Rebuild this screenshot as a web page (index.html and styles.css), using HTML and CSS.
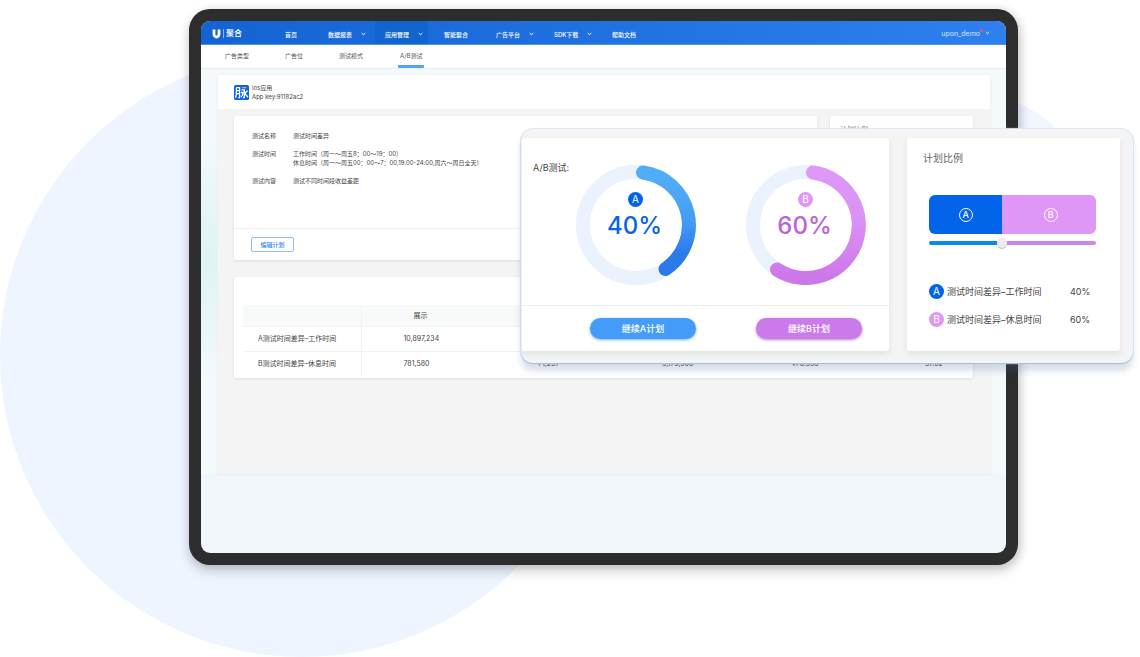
FILE: index.html
```html
<!DOCTYPE html>
<html lang="zh-CN">
<head>
<meta charset="utf-8">
<title>U聚合 A/B测试</title>
<link rel="stylesheet" href="styles.css">
</head>
<body>
<main class="stage">
  <div class="bubble bubble-large"></div>
  <div class="bubble bubble-small"></div>
  <div class="tablet">
    <div class="screen">
      <header class="topbar">
        <a class="brand" href="#">
          <svg class="brand-mark" viewBox="0 0 9 10"><path d="M2 0.5V5.2a2.5 2.8 0 0 0 5 0V0.5" fill="none" stroke="#fff" stroke-width="2.8"/></svg>
          <span class="brand-name">聚合</span>
        </a>
        <nav class="menu">
          <a class="menu-item home" href="#">首页</a>
          <a class="menu-item reports" href="#">数据报表<svg class="chevron" viewBox="0 0 5 4"><path d="M0.7 1l1.8 1.7L4.3 1"/></svg></a>
          <a class="menu-item apps" href="#">应用管理<svg class="chevron" viewBox="0 0 5 4"><path d="M0.7 1l1.8 1.7L4.3 1"/></svg></a>
          <a class="menu-item smart" href="#">智能聚合</a>
          <a class="menu-item platform" href="#">广告平台<svg class="chevron" viewBox="0 0 5 4"><path d="M0.7 1l1.8 1.7L4.3 1"/></svg></a>
          <a class="menu-item sdk" href="#">SDK下载<svg class="chevron" viewBox="0 0 5 4"><path d="M0.7 1l1.8 1.7L4.3 1"/></svg></a>
          <a class="menu-item docs" href="#">帮助文档</a>
        </nav>
        <a class="user" href="#">upon_demo<i class="dot"></i><svg class="chevron" viewBox="0 0 5 4"><path d="M0.7 1l1.8 1.7L4.3 1"/></svg></a>
      </header>
      <nav class="subnav">
        <a href="#">广告类型</a>
        <a href="#">广告位</a>
        <a href="#">测试模式</a>
        <a class="current" href="#">A/B测试</a>
      </nav>
      <div class="workspace">
        <section class="app">
          <div class="app-head">
            <svg class="app-icon" viewBox="0 0 14 14"><rect width="14" height="14" rx="1.5" fill="#0b63ea"/><g fill="none" stroke="#fff" stroke-width="1.2"><path d="M2.2 2.4h3v9.300H4M2.2 2.4v6.5l-.8 3M2.2 5.2h3M2.2 8h3M7 4.6h2.700v7.2H8.300M6.5 7h2c0 2-.8 3.300-2 4.300M12.700 5.200l-2.200 2.300M9.800 6c.6 2.600 1.500 4.200 3.200 5.300"/></g><path d="M7.500 2.500h4" stroke="#ffa42b" stroke-width="1.200"/></svg>
            <div><p>ios应用</p><p>App key:91182ac2</p></div>
          </div>
          <div class="app-body">
            <div class="row">
              <div class="card plan">
                <dl class="facts">
                  <dt>测试名称</dt><dd>测试时间差异</dd>
                  <dt>测试时间</dt><dd>工作时间（周一～周五8：00～19：00）<br>休息时间（周一～周五00：00～7：00,19:00-24:00,周六～周日全天）</dd>
                  <dt>测试内容</dt><dd>测试不同时间段收益差距</dd>
                </dl>
                <div class="plan-foot"><button class="edit" type="button">编辑计划</button></div>
              </div>
              <div class="card ratio-small">计划比例</div>
            </div>
            <div class="card results">
              <table class="table">
                <colgroup><col class="col-name"><col class="col-a"><col class="col-b"><col class="col-c"><col class="col-d"><col></colgroup>
                <thead><tr><th></th><th>展示</th><th></th><th></th><th></th><th></th></tr></thead>
                <tbody>
                  <tr><td>A测试时间差异–工作时间</td><td>10,897,234</td><td></td><td></td><td></td><td></td></tr>
                  <tr><td>B测试时间差异–休息时间</td><td>781,580</td><td>71,237</td><td>9,175,568</td><td>¥78.558</td><td>57.02</td></tr>
                </tbody>
              </table>
            </div>
          </div>
        </section>
      </div>
    </div>
  </div>

  <section class="popup">
    <div class="panel compare">
      <div class="charts">
        <h2 class="compare-title">A/B测试:</h2>
        <div class="ring">
          <svg class="ring-art" viewBox="0 0 120 120">
            <defs><linearGradient id="blue" x1="0" y1="0" x2="0" y2="1"><stop offset="0.050" stop-color="#52adf7"/><stop offset="0.500" stop-color="#459cf4"/><stop offset="0.850" stop-color="#2c79ea"/></linearGradient></defs>
            <circle cx="60" cy="60" r="53" fill="none" stroke="#eaf2fe" stroke-width="14"/>
            <path d="M67 7.500A53 53 0 0 1 89.500 104" fill="none" stroke="url(#blue)" stroke-width="14" stroke-linecap="round"/>
          </svg>
          <div class="ring-label"><span class="badge badge-a">A</span><strong class="value-a">40%</strong></div>
        </div>
        <div class="ring">
          <svg class="ring-art" viewBox="0 0 120 120">
            <defs><linearGradient id="pink" x1="0" y1="0" x2="0" y2="1"><stop offset="0" stop-color="#de98f8"/><stop offset="0.500" stop-color="#da8ff4"/><stop offset="1" stop-color="#cd77e9"/></linearGradient></defs>
            <circle cx="60" cy="60" r="53" fill="none" stroke="#eaf2fe" stroke-width="14"/>
            <path d="M67 7.500A53 53 0 1 1 31 104.500" fill="none" stroke="url(#pink)" stroke-width="14" stroke-linecap="round"/>
          </svg>
          <div class="ring-label"><span class="badge badge-b">B</span><strong class="value-b">60%</strong></div>
        </div>
      </div>
      <div class="actions">
        <button class="go go-a" type="button">继续A计划</button>
        <button class="go go-b" type="button">继续B计划</button>
      </div>
    </div>
    <div class="panel ratio">
      <h2 class="ratio-title"><label for="split">计划比例</label></h2>
      <div class="split"><div class="split-a"><span class="outline">A</span></div><div class="split-b"><span class="outline">B</span></div></div>
      <input class="slider" id="split" type="range" min="0" max="100" value="43">
      <ul class="legend">
        <li><span class="badge badge-a">A</span><span class="legend-name">测试时间差异–工作时间</span><span>40%</span></li>
        <li><span class="badge badge-b">B</span><span class="legend-name">测试时间差异–休息时间</span><span>60%</span></li>
      </ul>
    </div>
  </section>
</main>
</body>
</html>
```
FILE: styles.css
```css
* { box-sizing: border-box; }
body {
  margin: 0;
  background: #fff;
  color: #444;
  font-family: Inter, "Noto Sans CJK SC", sans-serif;
  font-size: 6px;
  line-height: 9px;
}
p, h2, dl, dd, ul { margin: 0; padding: 0; }
a { color: inherit; text-decoration: none; }
button { font-family: inherit; padding: 0; cursor: pointer; }

.stage {
  position: relative;
  min-height: 657px;
  padding: 9px 122px 92px 189px;
  overflow: hidden;
}
.bubble { position: absolute; border-radius: 50%; background: #eff5ff; }
.bubble-large { left: 0; top: 53px; width: 604px; height: 604px; }
.bubble-small { right: 40px; top: 90px; width: 280px; height: 280px; background: #f1f5ff; }

.tablet {
  position: relative;
  padding: 12px;
  border-radius: 21px;
  background: #2d2d2d;
  box-shadow: 0 6px 12px rgba(0, 0, 0, .2), 3px 0 10px rgba(0, 0, 0, .1);
}
.screen {
  padding-bottom: 79px;
  border-radius: 9px;
  overflow: hidden;
  background: #f1f6fa;
}
.topbar {
  display: flex;
  align-items: center;
  height: 24px;
  padding: 0 16px 0 11px;
  background: linear-gradient(90deg, #1463d2, #2d80ee);
  border-bottom: 1px solid #438cf0;
  color: #fff;
}
.brand { display: flex; align-items: center; gap: 2px; width: 61px; padding-top: 2px; }
.brand-mark { width: 9px; height: 10px; }
.brand-name { padding-left: 2px; border-left: 1px solid #8cb5ee; font-size: 8px; font-weight: 500; }
.menu { display: flex; align-self: stretch; font-weight: 500; }
.menu-item { display: flex; align-items: center; gap: 9px; padding: 3px 12px 0; white-space: nowrap; }
.home { width: 43px; }
.reports { width: 59px; }
.apps { width: 53px; padding: 3px 0 0 10px; background: #1265cf; }
.smart { width: 52px; padding-left: 16px; }
.platform { width: 58px; padding-left: 16px; }
.sdk { width: 58px; padding-left: 16px; }
.docs { padding-left: 16px; }
.chevron { width: 5px; height: 4px; fill: none; stroke: currentColor; stroke-width: 1; flex: none; }
.user { display: flex; align-items: center; margin-left: auto; padding-top: 1px; font-size: 7px; color: #d5e5fc; }
.dot { align-self: flex-start; width: 3px; height: 3px; margin-right: 2px; border-radius: 50%; background: #f05555; }
.subnav {
  display: flex;
  gap: 36px;
  height: 24px;
  padding-left: 24px;
  background: #fff;
  border-bottom: 1px solid #e9edf0;
  box-shadow: 0 1px 2px #e7ebee;
  color: #555;
}
.subnav a { padding-top: 6px; }
.subnav .current { padding: 6px 2px 0; margin-left: -1px; background: linear-gradient(#57a2fa, #57a2fa) 0 100% / 100% 3px no-repeat; border-radius: 1px; }

.workspace {
  padding: 6px 16px 0 17px;
  background: radial-gradient(ellipse 60px 120px at 0 190px, #dcf4f0, transparent), #f4f9fb;
}
.app { background: #f4f4f4; box-shadow: 0 0 3px #e4e9ec; }
.app-head { display: flex; align-items: center; gap: 3px; height: 34px; padding-left: 16px; background: #fff; }
.app-icon { width: 15px; height: 15px; }
.app-body { min-height: 365px; padding: 7px 17px 0 16px; }
.row { display: flex; gap: 13px; }
.card { background: #fff; border-radius: 2px; box-shadow: 0 1px 3px rgba(0, 0, 0, .1); }
.plan { flex: 1; }
.facts { display: grid; grid-template-columns: 41px 1fr; row-gap: 9px; align-items: start; height: 112px; align-content: start; padding: 15px 17px 0 18px; }
.plan-foot { height: 32px; padding: 8px 17px; border-top: 1px solid #f1f1f1; }
.edit { display: block; width: 43px; height: 15px; border: 1px solid #91bdf8; border-radius: 2px; background: #fff; color: #3686f4; font-size: 6px; font-weight: 500; line-height: 12px; }
.ratio-small { width: 143px; padding: 9px 10px; color: #666; font-size: 7px; }
.results { margin-top: 17px; padding: 28px 9px 2px; }
.table { width: 100%; table-layout: fixed; border-collapse: collapse; font-size: 7px; }
.col-name { width: 118px; }
.col-a { width: 135px; }
.col-b { width: 124px; }
.col-c { width: 130px; }
.col-d { width: 133px; }
.table th, .table td { height: 25px; padding: 0 0 1px 42px; text-align: left; font-weight: 400; border-bottom: 1px solid #eef4f5; }
.table th { height: 21px; padding: 0 0 0 52px; background: #f8faf9; }
.table tr > :first-child { padding-left: 15px; border-right: 1px solid #eef2f4; white-space: nowrap; }
.table tr:last-child td { border-bottom: 0; }

.popup {
  position: absolute;
  top: 129px;
  left: 521px;
  right: 7px;
  display: flex;
  gap: 18px;
  padding: 9px 13px 12px 1px;
  border-radius: 12px;
  background: #f4f4f4;
  box-shadow: 0 1px 1px #9dbbe4, 0 0 1px 1px #dce8f9, 0 8px 6px rgba(70, 95, 145, .2);
}
.panel { background: #fff; border-radius: 3px; box-shadow: 0 3px 6px rgba(0, 0, 0, .08); }
.compare { flex: 1; }
.charts { display: flex; height: 168px; padding: 27px 23px 0 11px; border-bottom: 1px solid #eee; }
.compare-title { width: 43px; font-size: 9px; line-height: 5px; font-weight: 400; white-space: nowrap; }
.ring { display: grid; width: 120px; height: 120px; }
.ring + .ring { margin-left: auto; }
.ring-art, .ring-label { grid-area: 1 / 1; }
.ring-art { width: 120px; height: 120px; }
.ring-label { display: flex; flex-direction: column; align-items: center; padding: 27px 3px 0 0; }
.ring-label .badge { margin-left: 2px; }
.ring-label strong { font-size: 24px; line-height: 37px; font-weight: 500; }
.value-a { color: #0864e8; }
.value-b { color: #bc62dc; }
.badge { flex: none; width: 15px; height: 15px; border-radius: 50%; color: #fff; font-size: 10px; line-height: 15px; text-align: center; }
.badge-a { background: #0264e8; }
.badge-b { background: #de96f7; }
.actions { display: flex; justify-content: space-between; padding: 12px 27px 12px 68px; }
.go { width: 106px; height: 21px; border: 0; border-radius: 11px; color: #fff; font-size: 9px; font-weight: 500; line-height: 20px; }
.go-a { background: #459cf8; box-shadow: 0 1px 3px #77b2ed; }
.go-b { background: #cb7be9; box-shadow: 0 1px 3px #b683c8; }
.ratio { width: 213px; padding: 13px 24px 0 22px; }
.ratio-title { margin-left: -6px; font-size: 10px; font-weight: 400; line-height: 14px; color: #666; }
.split { display: flex; height: 39px; margin-top: 30px; border-radius: 6px; overflow: hidden; }
.split > div { display: flex; align-items: center; justify-content: center; }
.split-a { width: 44%; background: #0264e8; }
.split-b { flex: 1; padding-left: 3px; background: #de96f7; }
.outline { width: 14px; height: 14px; border: 1px solid #fff; border-radius: 50%; color: #fff; font-size: 9px; line-height: 12px; text-align: center; font-weight: 500; }
.slider { display: block; appearance: none; width: 100%; height: 10px; margin: 4px 0 0; background: none; }
.slider::-webkit-slider-runnable-track { height: 4px; border-radius: 2px; background: linear-gradient(90deg, #078af2 43%, #d284ed 43%); }
.slider::-webkit-slider-thumb { appearance: none; width: 10px; height: 10px; margin-top: -3px; border-radius: 50%; background: #eee; box-shadow: 0 1px 1px #bbb; }
.legend { list-style: none; padding-top: 36px; font-size: 9px; }
.legend li { display: flex; align-items: center; gap: 3px; height: 15px; margin-bottom: 13px; }
.legend-name { width: 120px; white-space: nowrap; }
```
